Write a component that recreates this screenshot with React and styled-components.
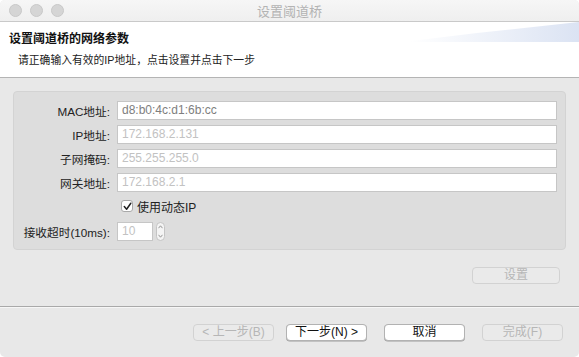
import React from 'react';
import styled, { createGlobalStyle } from 'styled-components';

const GlobalStyle = createGlobalStyle`
  html, body {
    margin: 0;
    padding: 0;
    background: #ffffff;
  }
  body {
    font-family: "Liberation Sans", "Noto Sans CJK SC", sans-serif;
    -webkit-font-smoothing: antialiased;
  }
`;

const Window = styled.div`
  width: 579px;
  height: 357px;
  border-radius: 5px;
  overflow: hidden;
  background: #e8e8e8;
  display: flex;
  flex-direction: column;
`;

const TitleBar = styled.div`
  height: 21px;
  flex: none;
  display: flex;
  align-items: center;
  position: relative;
  background: linear-gradient(#f6f6f6, #efefef);
  border-bottom: 1px solid #c9c9c9;
`;

const Lights = styled.div`
  display: flex;
  gap: 8px;
  padding-left: 9px;
`;

const Light = styled.span`
  width: 11px;
  height: 11px;
  border-radius: 50%;
  background: #d5d5d5;
  border: 0.5px solid #c8c8c8;
`;

const Title = styled.div`
  position: absolute;
  left: 0;
  right: 0;
  text-align: center;
  font-size: 13px;
  color: #b3b3b3;
  pointer-events: none;
`;

const Header = styled.div`
  height: 56px;
  flex: none;
  box-sizing: border-box;
  padding: 9px 0 0 9px;
  background: #ffffff;
  border-bottom: 1px solid #b4b4b4;
  position: relative;

  &::before {
    content: '';
    position: absolute;
    right: 0;
    top: 0;
    width: 170px;
    height: 20px;
    background: linear-gradient(to right, rgba(219, 227, 243, 0), #dbe3f3);
    clip-path: polygon(0 96%, 40% 55%, 100% 0, 100% 100%, 0 100%);
  }
`;

const HeaderTitle = styled.div`
  position: relative;
  font-size: 12px;
  font-weight: bold;
  color: #111;
  line-height: 16px;
`;

const HeaderSub = styled.div`
  font-size: 10.8px;
  color: #222;
  line-height: 14px;
  margin: 6px 0 0 9px;
`;

const Body = styled.div`
  flex: 1;
  padding: 13px 13px 0;
  display: flex;
  flex-direction: column;
`;

const GroupBox = styled.div`
  height: 159px;
  box-sizing: border-box;
  background: #dddddd;
  border: 1px solid #d3d3d3;
  border-radius: 4px;
  padding: 9px 8px 0 0;
  display: grid;
  grid-template-columns: 96px 1fr;
  column-gap: 7px;
  row-gap: 5px;
  align-content: start;
  align-items: center;
`;

const Label = styled.label`
  font-size: 11.7px;
  color: #222;
  text-align: right;
  white-space: nowrap;
  margin-top: ${(p) => p.$offset || 0};
`;

const Field = styled.div`
  height: 19px;
  box-sizing: border-box;
  background: #ffffff;
  border: 1px solid #c6c6c6;
  padding-left: 4px;
  font-size: 12px;
  line-height: 17px;
  color: ${(p) => (p.$dim ? '#c2c2c2' : '#7e7e7e')};
  width: ${(p) => p.$width || 'auto'};
`;

const CheckRow = styled.div`
  grid-column: 2;
  display: flex;
  align-items: center;
  gap: 4px;
  height: 18px;
  margin: 0 0 0 4px;
  font-size: 12px;
  color: #222;
`;

const CheckBox = styled.span`
  width: 12px;
  height: 12px;
  box-sizing: border-box;
  border: 1px solid #a9a9a9;
  border-radius: 3px;
  background: #ffffff;
  display: flex;
  align-items: center;
  justify-content: center;
`;

const SpinWrap = styled.div`
  display: flex;
  align-items: center;
  gap: 3px;
  margin-top: 2px;
`;

const Stepper = styled.div`
  width: 9px;
  height: 19px;
  box-sizing: border-box;
  border: 1px solid #c4c4c4;
  border-radius: 5px;
  background: #f4f4f4;
  display: flex;
  flex-direction: column;
  align-items: center;
  justify-content: space-around;
`;

const ActionRow = styled.div`
  display: flex;
  justify-content: flex-end;
  padding: 17px 6px 0 0;
`;

const Button = styled.button`
  width: ${(p) => p.$width || '81px'};
  height: 17px;
  box-sizing: border-box;
  padding: 0;
  border-radius: 4px;
  font-family: inherit;
  font-size: 12px;
  line-height: 15px;
  border: 1px solid ${(p) => (p.disabled ? '#d2d2d2' : '#b2b2b2')};
  background: ${(p) => (p.disabled ? '#eaeaea' : '#ffffff')};
  color: ${(p) => (p.disabled ? '#b6b6b6' : '#111')};
  box-shadow: ${(p) => (p.disabled ? 'none' : '0 0.5px 0 #9c9c9c')};
`;

const Footer = styled.div`
  height: 51px;
  flex: none;
  border-top: 1px solid #a9a9a9;
  box-shadow: inset 0 1px 0 #f6f6f6;
  display: flex;
  justify-content: flex-end;
  gap: 17px;
  padding: 17px 16px 0 0;
  box-sizing: border-box;
`;

const NavPair = styled.div`
  display: flex;
  gap: 12px;
`;

const fields = [
  { label: 'MAC地址:', value: 'd8:b0:4c:d1:6b:cc', dim: false },
  { label: 'IP地址:', value: '172.168.2.131', dim: true },
  { label: '子网掩码:', value: '255.255.255.0', dim: true },
  { label: '网关地址:', value: '172.168.2.1', dim: true },
];

export default function App() {
  return (
    <>
      <GlobalStyle />
      <Window>
        <TitleBar>
          <Lights>
            <Light />
            <Light />
            <Light />
          </Lights>
          <Title>设置阈道桥</Title>
        </TitleBar>
        <Header>
          <HeaderTitle>设置阈道桥的网络参数</HeaderTitle>
          <HeaderSub>请正确输入有效的IP地址，点击设置并点击下一步</HeaderSub>
        </Header>
        <Body>
          <GroupBox>
            {fields.map((f) => (
              <React.Fragment key={f.label}>
                <Label>{f.label}</Label>
                <Field $dim={f.dim}>{f.value}</Field>
              </React.Fragment>
            ))}
            <CheckRow>
              <CheckBox>
                <svg width="9" height="9" viewBox="0 0 9 9">
                  <path d="M1.3 4.6 L3.6 7.2 L7.8 1.2" fill="none" stroke="#222" strokeWidth="1.5" strokeLinecap="round" strokeLinejoin="round" />
                </svg>
              </CheckBox>
              使用动态IP
            </CheckRow>
            <Label $offset="2px">接收超时(10ms):</Label>
            <SpinWrap>
              <Field $dim $width="36px">10</Field>
              <Stepper>
                <svg width="5" height="4" viewBox="0 0 5 4">
                  <path d="M0.5 3.2 L2.5 0.8 L4.5 3.2" fill="none" stroke="#8a8a8a" strokeWidth="0.9" />
                </svg>
                <svg width="5" height="4" viewBox="0 0 5 4">
                  <path d="M0.5 0.8 L2.5 3.2 L4.5 0.8" fill="none" stroke="#8a8a8a" strokeWidth="0.9" />
                </svg>
              </Stepper>
            </SpinWrap>
          </GroupBox>
          <ActionRow>
            <Button disabled $width="88px">设置</Button>
          </ActionRow>
        </Body>
        <Footer>
          <NavPair>
            <Button disabled>&lt; 上一步(B)</Button>
            <Button>下一步(N) &gt;</Button>
          </NavPair>
          <Button>取消</Button>
          <Button disabled>完成(F)</Button>
        </Footer>
      </Window>
    </>
  );
}
